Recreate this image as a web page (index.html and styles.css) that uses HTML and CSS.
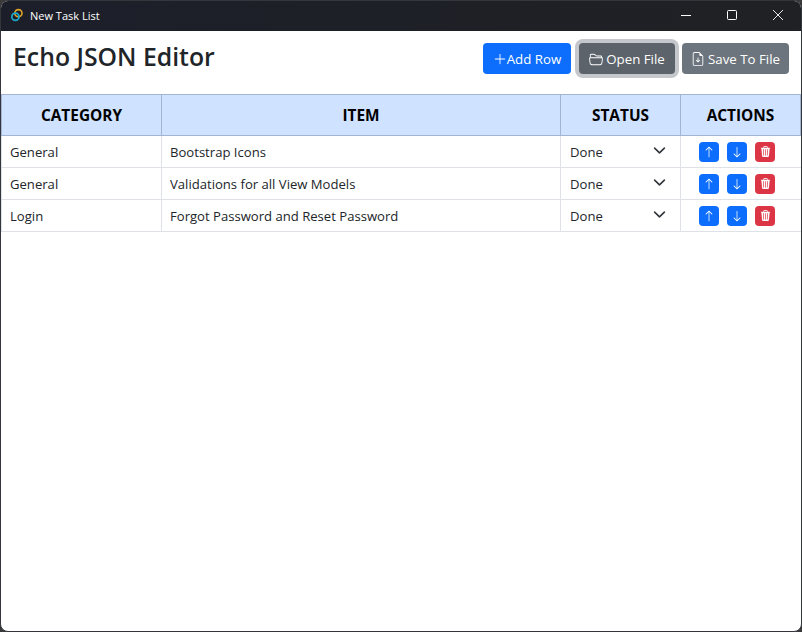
FILE: index.html
```html
<!DOCTYPE html>
<html lang="en">
<head>
    <meta charset="UTF-8">
    <meta name="viewport" content="width=device-width, initial-scale=1.0">
    <title>New Task List</title>
    <link rel="stylesheet" href="styles.css">
</head>
<body>
    <svg class="sprites" width="0" height="0">
        <symbol id="i-up" viewBox="0 0 16 16"><path fill="currentColor" d="M8 15a.5.5 0 0 0 .5-.5V2.707l3.146 3.147a.5.5 0 0 0 .708-.708l-4-4a.5.5 0 0 0-.708 0l-4 4a.5.5 0 1 0 .708.708L7.5 2.707V14.5a.5.5 0 0 0 .5.5z"/></symbol>
        <symbol id="i-down" viewBox="0 0 16 16"><path fill="currentColor" d="M8 1a.5.5 0 0 1 .5.5v11.793l3.146-3.147a.5.5 0 0 1 .708.708l-4 4a.5.5 0 0 1-.708 0l-4-4a.5.5 0 0 1 .708-.708L7.5 13.293V1.5A.5.5 0 0 1 8 1z"/></symbol>
        <symbol id="i-trash" viewBox="0 0 16 16"><path fill="currentColor" d="M11 1.5v1h3.5a.5.5 0 0 1 0 1h-.538l-.853 10.66A2 2 0 0 1 11.115 16h-6.23a2 2 0 0 1-1.994-1.84L2.038 3.5H1.5a.5.5 0 0 1 0-1H5v-1A1.5 1.5 0 0 1 6.5 0h3A1.5 1.5 0 0 1 11 1.5Zm-5 0v1h4v-1a.5.5 0 0 0-.5-.5h-3a.5.5 0 0 0-.5.5ZM4.5 5.029l.5 8.5a.5.5 0 1 0 .998-.06l-.5-8.5a.5.5 0 1 0-.998.06Zm6.53-.528a.5.5 0 0 0-.528.47l-.5 8.5a.5.5 0 0 0 .998.058l.5-8.5a.5.5 0 0 0-.47-.528ZM8 4.5a.5.5 0 0 0-.5.5v8.5a.5.5 0 0 0 1 0V5a.5.5 0 0 0-.5-.5Z"/></symbol>
    </svg>

    <div class="window">
        <div class="titlebar">
            <svg class="app-icon" viewBox="0 0 14 14" width="14" height="14">
                <circle cx="8.4" cy="5.2" r="3.6" fill="none" stroke="#e0a526" stroke-width="1.6"/>
                <circle cx="5.4" cy="8.8" r="3.6" fill="none" stroke="#1ba7c9" stroke-width="1.8"/>
            </svg>
            <span class="app-title">New Task List</span>
            <div class="win-controls">
                <span class="win-btn">
                    <svg viewBox="0 0 10 10" width="10" height="10"><path d="M0 5.5h10" stroke="#fff" fill="none"/></svg>
                </span>
                <span class="win-btn">
                    <svg viewBox="0 0 10 10" width="10" height="10"><rect x=".5" y=".5" width="9" height="9" rx="1" stroke="#fff" fill="none"/></svg>
                </span>
                <span class="win-btn">
                    <svg viewBox="0 0 10 10" width="10" height="10"><path d="M0 0l10 10M10 0L0 10" stroke="#fff" stroke-width=".9" fill="none"/></svg>
                </span>
            </div>
        </div>

        <header class="page-header">
            <h1>Echo JSON Editor</h1>
            <div class="toolbar">
                <button class="btn btn-primary btn-add" type="button">
                    <svg class="btn-icon" viewBox="0 0 16 16"><path fill="currentColor" d="M8 2a.5.5 0 0 1 .5.5v5h5a.5.5 0 0 1 0 1h-5v5a.5.5 0 0 1-1 0v-5h-5a.5.5 0 0 1 0-1h5v-5A.5.5 0 0 1 8 2Z"/></svg>
                    <span>Add Row</span>
                </button>
                <button class="btn btn-secondary btn-open focused" type="button">
                    <svg class="btn-icon" viewBox="0 0 16 16"><path fill="currentColor" d="M1 3.5A1.5 1.5 0 0 1 2.5 2h2.764c.958 0 1.76.56 2.311 1.184C7.985 3.648 8.48 4 9 4h4.5A1.5 1.5 0 0 1 15 5.5v.64c.57.265.94.876.856 1.546l-.64 5.124A2.5 2.5 0 0 1 12.733 15H3.266a2.5 2.5 0 0 1-2.481-2.19l-.64-5.124A1.5 1.5 0 0 1 1 6.14V3.5zM2 6h12v-.5a.5.5 0 0 0-.5-.5H9c-.964 0-1.71-.629-2.174-1.154C6.374 3.334 5.82 3 5.264 3H2.5a.5.5 0 0 0-.5.5V6zm-.367 1a.5.5 0 0 0-.496.562l.64 5.124A1.5 1.5 0 0 0 3.266 14h9.468a1.5 1.5 0 0 0 1.489-1.314l.64-5.124A.5.5 0 0 0 14.367 7H1.633z"/></svg>
                    <span>Open File</span>
                </button>
                <button class="btn btn-secondary btn-save" type="button">
                    <svg class="btn-icon" viewBox="0 0 16 16"><path fill="currentColor" d="M8.5 6.5a.5.5 0 0 0-1 0v3.793L6.354 9.146a.5.5 0 1 0-.708.708l2 2a.5.5 0 0 0 .708 0l2-2a.5.5 0 0 0-.708-.708L8.5 10.293V6.5z"/><path fill="currentColor" d="M14 14V4.5L9.5 0H4a2 2 0 0 0-2 2v12a2 2 0 0 0 2 2h8a2 2 0 0 0 2-2zM9.5 3A1.5 1.5 0 0 0 11 4.5h2V14a1 1 0 0 1-1 1H4a1 1 0 0 1-1-1V2a1 1 0 0 1 1-1h5.5v2z"/></svg>
                    <span>Save To File</span>
                </button>
            </div>
        </header>

        <table class="task-table">
            <colgroup>
                <col class="col-category">
                <col class="col-item">
                <col class="col-status">
                <col class="col-actions">
            </colgroup>
            <thead>
                <tr>
                    <th>CATEGORY</th>
                    <th>ITEM</th>
                    <th>STATUS</th>
                    <th>ACTIONS</th>
                </tr>
            </thead>
            <tbody>
                <tr>
                    <td>General</td>
                    <td>Bootstrap Icons</td>
                    <td><select class="status"><option>Done</option></select></td>
                    <td>
                        <div class="row-actions">
                            <button class="icon-btn btn-primary" type="button"><svg><use href="#i-up"/></svg></button>
                            <button class="icon-btn btn-primary" type="button"><svg><use href="#i-down"/></svg></button>
                            <button class="icon-btn btn-danger" type="button"><svg class="trash"><use href="#i-trash"/></svg></button>
                        </div>
                    </td>
                </tr>
                <tr>
                    <td>General</td>
                    <td>Validations for all View Models</td>
                    <td><select class="status"><option>Done</option></select></td>
                    <td>
                        <div class="row-actions">
                            <button class="icon-btn btn-primary" type="button"><svg><use href="#i-up"/></svg></button>
                            <button class="icon-btn btn-primary" type="button"><svg><use href="#i-down"/></svg></button>
                            <button class="icon-btn btn-danger" type="button"><svg class="trash"><use href="#i-trash"/></svg></button>
                        </div>
                    </td>
                </tr>
                <tr>
                    <td>Login</td>
                    <td>Forgot Password and Reset Password</td>
                    <td><select class="status"><option>Done</option></select></td>
                    <td>
                        <div class="row-actions">
                            <button class="icon-btn btn-primary" type="button"><svg><use href="#i-up"/></svg></button>
                            <button class="icon-btn btn-primary" type="button"><svg><use href="#i-down"/></svg></button>
                            <button class="icon-btn btn-danger" type="button"><svg class="trash"><use href="#i-trash"/></svg></button>
                        </div>
                    </td>
                </tr>
            </tbody>
        </table>
    </div>
</body>
</html>
```

FILE: styles.css
```css
* {
    box-sizing: border-box;
}

html, body {
    height: 100%;
}

body {
    margin: 0;
    background-color: #3a3a3a;
    font-family: "Open Sans", "Noto Sans", Arial, sans-serif;
    color: #212529;
    overflow: hidden;
}

.sprites {
    position: absolute;
}

.window {
    height: 100%;
    display: flex;
    flex-direction: column;
    background-color: #fff;
    border: 1px solid #33363b;
    border-radius: 8px;
    overflow: hidden;
}

/* title bar */
.titlebar {
    flex: none;
    height: 30px;
    display: flex;
    align-items: center;
    padding: 0 0 2px 9px;
    background: linear-gradient(90deg, #1c1f2a, #202124);
    color: #fff;
}

.app-icon {
    margin-right: 6px;
}

.app-title {
    font-size: 11px;
}

.win-controls {
    margin-left: auto;
    display: flex;
}

.win-btn {
    width: 46px;
    height: 28px;
    display: flex;
    align-items: center;
    justify-content: center;
}

/* page header */
.page-header {
    flex: none;
    height: 63px;
    display: flex;
    justify-content: space-between;
    padding: 11px 12px 0 12px;
}

.page-header h1 {
    margin: 0;
    font-size: 24.8px;
    font-weight: 600;
    line-height: 28px;
}

.toolbar {
    display: flex;
    align-items: flex-start;
    gap: 8px;
    padding-top: 1px;
}

.btn {
    height: 31px;
    display: inline-flex;
    align-items: center;
    justify-content: center;
    gap: 3px;
    padding: 0;
    border: none;
    border-radius: 4px;
    font-family: inherit;
    font-size: 13.3px;
    color: #fff;
    cursor: pointer;
}

.btn-add {
    width: 88px;
    gap: 0;
}

.btn-open {
    width: 96px;
}

.btn-save {
    width: 107px;
    margin-left: -1px;
}

.btn-primary {
    background-color: #0d6efd;
}

.btn-secondary {
    background-color: #6c757d;
}

.btn-danger {
    background-color: #dc3545;
}

.focused {
    background-color: #5c636a;
    box-shadow: 0 0 0 4px #c4c8cc;
}

.btn-icon {
    width: 14px;
    height: 14px;
}

/* table */
.task-table {
    width: 100%;
    table-layout: fixed;
    border-collapse: separate;
    border-spacing: 0;
    font-size: 13.1px;
}

.col-category {
    width: 161px;
}

.col-status,
.col-actions {
    width: 120px;
}

.task-table th {
    height: 42px;
    padding: 0;
    background-color: #cfe2ff;
    border-top: 1px solid #a3b5d2;
    border-bottom: 1px solid #a3b5d2;
    border-right: 1px solid #a3b5d2;
    font-size: 15.4px;
    font-weight: 700;
    color: #000;
    text-align: center;
}

.task-table th:first-child {
    border-left: 1px solid #a3b5d2;
}

.task-table td {
    height: 32px;
    padding: 0 8px;
    border-bottom: 1px solid #dee2e6;
    border-right: 1px solid #dee2e6;
}

.task-table td:first-child {
    border-left: 1px solid #dee2e6;
}

.task-table td:last-child {
    border-right: none;
}

.status {
    display: block;
    width: 100%;
    height: 30px;
    padding: 0 0 0 1px;
    border: none;
    background: transparent url("data:image/svg+xml,%3csvg xmlns='http://www.w3.org/2000/svg' viewBox='0 0 16 16'%3e%3cpath fill='none' stroke='%23343a40' stroke-linecap='round' stroke-linejoin='round' stroke-width='2' d='m2 5 6 6 6-6'/%3e%3c/svg%3e") no-repeat right 6px top 7px / 13px 13px;
    appearance: none;
    font-family: inherit;
    font-size: 13.1px;
    color: #212529;
}

.row-actions {
    display: flex;
    gap: 8px;
    padding-left: 10px;
}

.icon-btn {
    width: 20px;
    height: 20px;
    padding: 0;
    display: flex;
    align-items: center;
    justify-content: center;
    border: none;
    border-radius: 4px;
    color: #fff;
    cursor: pointer;
}

.icon-btn svg {
    width: 12px;
    height: 12px;
}

.icon-btn svg.trash {
    width: 11px;
    height: 11px;
}
```
